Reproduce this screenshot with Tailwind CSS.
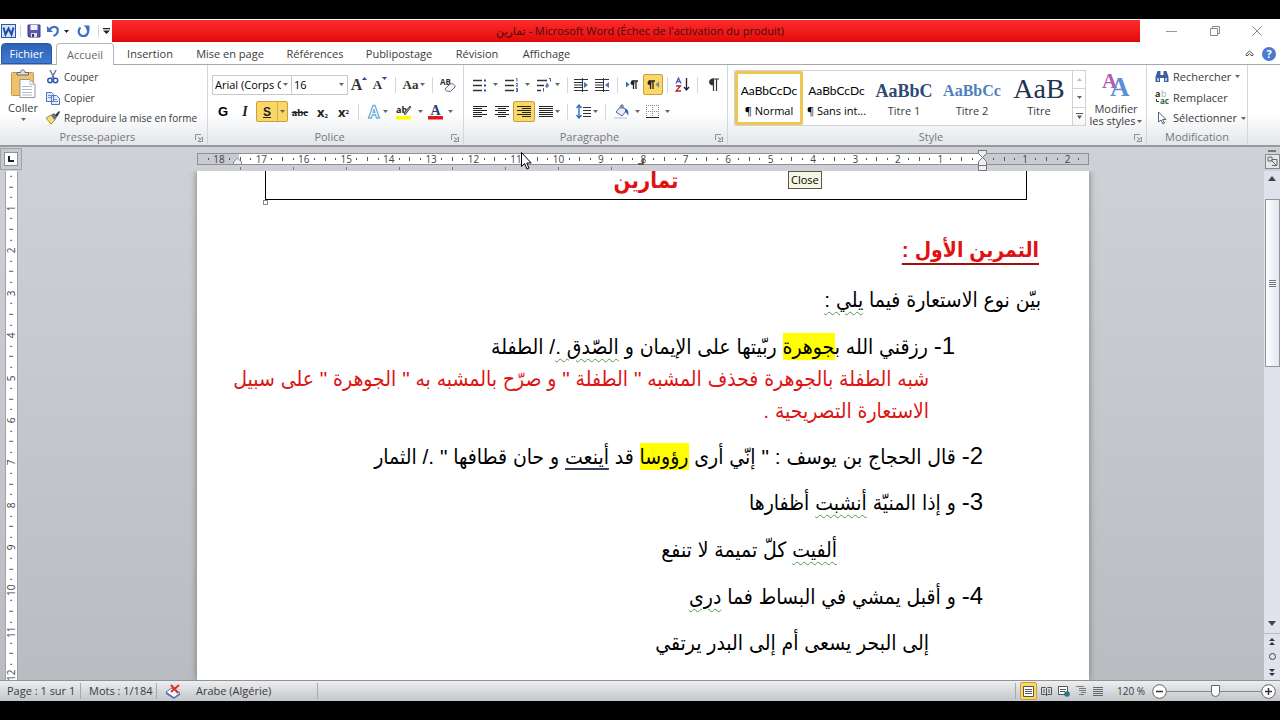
<!DOCTYPE html>
<html lang="fr">
<head>
  <meta charset="UTF-8">
  <meta name="viewport" content="width=device-width, initial-scale=1.0">
  <title>تمارين - Microsoft Word</title>
  <script src="https://cdn.jsdelivr.net/npm/@tailwindcss/browser@4"></script>
</head>
<body class="bg-black h-screen py-[19px] flex flex-col overflow-hidden font-['Open_Sans','DejaVu_Sans',sans-serif] text-[11px] leading-4 text-[#3b3b3b]">

  <!-- Shared icons -->
  <svg class="hidden">
    <symbol id="caret" viewBox="0 0 5 3"><path d="M0 0h5L2.5 3z" fill="#666"/></symbol>
    <symbol id="launcher" viewBox="0 0 8 8"><path d="M.5 6V.5H6M3 3l3 3M7.500 3v4.500H3z" fill="none" stroke="#8a8d91"/></symbol>
  </svg>

  <!-- Title bar -->
  <header class="h-6 shrink-0 bg-white flex items-center">
    <div class="w-28 flex items-center pl-px">
      <svg class="w-[15px] h-4 shrink-0" viewBox="0 0 15 16"><rect x=".5" y="1.500" width="14" height="13" fill="#d5e4f8" stroke="#2c5aa8"/><path d="M2.500 4.500l2 7 3-6 3 6 2-7" fill="none" stroke="#1d4fa3" stroke-width="2"/></svg>
      <span class="w-px h-3 bg-gray-300 mx-1"></span>
      <button class="ml-0.5" aria-label="Enregistrer"><svg class="w-[14px] h-[14px]" viewBox="0 0 14 14"><path d="M1 1h12v12H2l-1-1z" fill="#5a58b4" stroke="#3a3880"/><path d="M3.500 1h7v5h-7z" fill="#eef0fa"/><path d="M4 9h6v4H4z" fill="#d8daf0"/><path d="M5 10h2v3H5z" fill="#333377"/></svg></button>
      <button class="ml-1.5" aria-label="Annuler"><svg class="w-[13px] h-[14px]" viewBox="0 0 13 14"><path d="M2.500 5.500C6 1.500 11 2.500 10.800 6.500 10.700 9 9 11 6.500 12" fill="none" stroke="#3f6fc6" stroke-width="2.200"/><path d="M0 2v6h6z" fill="#3f6fc6"/></svg></button>
      <svg class="w-[5px] h-[3px] ml-1" viewBox="0 0 5 3"><path d="M0 0h5L2.500 3z" fill="#222"/></svg>
      <button class="ml-2" aria-label="Rétablir"><svg class="w-[13px] h-[14px]" viewBox="0 0 13 14"><path d="M3.500 3.500C0 7 2 12 6.500 12s6-5.500 3-8.500" fill="none" stroke="#3f6fc6" stroke-width="2.200"/><path d="M6.500 1.500h6v5.500z" fill="#3f6fc6"/></svg></button>
      <span class="w-px h-3 bg-gray-300 ml-2 mr-1"></span>
      <svg class="w-[7px] h-[6px] shrink-0" viewBox="0 0 7 6"><path d="M0 0h7v1.200H0zM0 2.500h7L3.500 6z" fill="#222"/></svg>
    </div>
    <h1 class="flex-1 h-[22px] pl-7 bg-gradient-to-b from-[#ff2a2a] to-[#e00808] text-center leading-[22px] text-[#4a0a0a]"><bdi>تمارين</bdi> - Microsoft Word (Échec de l'activation du produit)</h1>
    <div class="w-[140px] flex items-center justify-between pl-[26px] pr-[18px] text-[#777]">
      <button aria-label="Réduire"><svg class="w-[11px] h-3" viewBox="0 0 11 12"><path d="M0 6.500h11" stroke="#999"/></svg></button>
      <button aria-label="Restaurer"><svg class="w-[10px] h-3" viewBox="0 0 10 12"><path d="M.5 3.500h7v7h-7zM2.500 3.500v-2h7v7h-2" fill="none" stroke="#888"/></svg></button>
      <button aria-label="Fermer"><svg class="w-[10px] h-3" viewBox="0 0 10 12"><path d="M.5 1.500l9 9M9.500 1.500l-9 9" stroke="#888"/></svg></button>
    </div>
  </header>

  <!-- Tabs -->
  <nav class="h-[22px] shrink-0 bg-white border-b border-[#a5a8ac] flex items-end text-center">
    <button class="w-[51px] h-[21px] ml-px rounded-t-sm border border-[#2a57a5] bg-gradient-to-b from-[#2d62b8] to-[#3f7ad0] text-white">Fichier</button>
    <button class="w-[58px] h-[22px] ml-1 -mb-px rounded-t-sm border border-b-0 border-[#b4b7bb] bg-white text-[#666]">Accueil</button>
    <button class="w-[72px] h-[21px]">Insertion</button>
    <button class="w-[88px] h-[21px]">Mise en page</button>
    <button class="w-[82px] h-[21px]">Références</button>
    <button class="w-[86px] h-[21px]">Publipostage</button>
    <button class="w-[70px] h-[21px]">Révision</button>
    <button class="w-[69px] h-[21px]">Affichage</button>
    <div class="flex-1 h-[21px] flex items-center justify-end gap-2 pr-1">
      <button aria-label="Réduire le ruban"><svg class="w-[9px] h-[7px]" viewBox="0 0 9 7"><path d="M.7 4.500L4.500 1l3.800 3.500L7 6 4.500 3.800 2 6z" fill="#fff" stroke="#444"/></svg></button>
      <button class="size-[14px] rounded-full bg-[#4d7ad0] text-white font-bold leading-[14px]">?</button>
    </div>
  </nav>

  <!-- Ribbon -->
  <section class="h-[82px] shrink-0 flex border-b-2 border-[#97999d] bg-gradient-to-b from-white from-60% to-[#e3e6ea]">

    <div class="w-[208px] border-r border-[#d3d6da] flex flex-col">
      <div class="flex-1 flex">
        <button class="w-[46px] shrink-0 pt-1 flex flex-col items-center">
          <svg class="w-[25px] h-[29px]" viewBox="0 0 25 29"><rect x=".5" y="3.500" width="22" height="23" rx="1" fill="#efc169" stroke="#c99a45"/><path d="M6 6V3.500h3.500C9.500 0 14 0 14 3.500h3.500V6z" fill="#ddd" stroke="#666"/><path d="M9 10.500h10l5 5v13H9z" fill="#fff" stroke="#8f98a5"/><path d="M19 10.500v5h5M11 17.500h10M11 20.500h10M11 23.500h10M11 26h10" fill="none" stroke="#b5bcc8"/></svg>
          <span class="mt-0.5">Coller</span>
          <svg class="w-[5px] h-[3px] mt-0.5"><use href="#caret"/></svg>
        </button>
        <div class="flex flex-col pt-px text-[10px] whitespace-nowrap">
          <button class="h-[21px] flex items-center gap-1"><svg class="w-[14px] h-[14px] shrink-0" viewBox="0 0 14 14"><path d="M4 0l4.500 9M10 0L5.500 9" stroke="#6c7a93" stroke-width="1.500"/><circle cx="4" cy="10.500" r="2.200" fill="none" stroke="#2c55ab" stroke-width="1.500"/><circle cx="9.500" cy="10.500" r="2.200" fill="none" stroke="#2c55ab" stroke-width="1.500"/></svg>Couper</button>
          <button class="h-[21px] flex items-center gap-1"><svg class="w-[14px] h-[14px] shrink-0" viewBox="0 0 14 14"><path d="M.5 1.500h5l2 2v7h-7zM5.500 4.500h5l3 3v6h-8z" fill="#e4edfb" stroke="#5274b8"/><path d="M2 4.500h3M2 6.500h3M7 8.500h4M7 10.500h5" stroke="#6d8fd0"/></svg>Copier</button>
          <button class="h-[20px] flex items-center gap-1"><svg class="w-[14px] h-[14px] shrink-0" viewBox="0 0 14 14"><path d="M0 7l5-3 4 5-4 4z" fill="#f4dd7c" stroke="#a98d33"/><path d="M5 4l3-2 3 4-2 3z" fill="#68717f"/><path d="M9 4l4-4 1 1-3 5z" fill="#333"/></svg>Reproduire la mise en forme</button>
        </div>
      </div>
      <div class="h-4 flex items-center text-[#777]"><span class="flex-1 text-center">Presse-papiers</span><svg class="w-2 h-2 mr-1 mt-0.5"><use href="#launcher"/></svg></div>
    </div>

    <div class="w-64 border-r border-[#d3d6da] flex flex-col">
      <div class="flex-1 pt-[9px] flex flex-col gap-[6px]">
        <div class="h-[21px] flex items-center pl-1">
          <div class="relative w-20 h-[20px]">
            <select aria-label="Police" class="appearance-none w-full h-full pl-0.5 pr-2.5 border border-[#c6c9cd] bg-white text-black overflow-hidden whitespace-nowrap"><option>Arial (Corps CS)</option></select>
            <svg class="absolute right-1 top-2 w-[5px] h-[3px] pointer-events-none"><use href="#caret"/></svg>
          </div>
          <div class="relative w-[56px] h-[20px]">
            <select aria-label="Taille" class="appearance-none w-full h-full pl-0.5 border border-l-0 border-[#c6c9cd] bg-white text-black"><option>16</option></select>
            <svg class="absolute right-1 top-2 w-[5px] h-[3px] pointer-events-none"><use href="#caret"/></svg>
          </div>
          <button class="w-[22px] flex justify-center font-['Liberation_Serif',serif] font-bold text-[16px] text-[#333]" aria-label="Agrandir la police">A<svg class="w-[5px] h-[3px]" viewBox="0 0 5 3"><path d="M0 3h5L2.500 0z" fill="#234a9b"/></svg></button>
          <button class="w-[20px] flex justify-center font-['Liberation_Serif',serif] font-bold text-[13px] text-[#333]" aria-label="Réduire la police">A<svg class="w-[5px] h-[3px]" viewBox="0 0 5 3"><path d="M0 0h5L2.500 3z" fill="#234a9b"/></svg></button>
          <span class="w-px h-4 bg-[#d3d6da] mx-[5px]"></span>
          <button class="w-[26px] flex items-center justify-center gap-0.5 font-['Liberation_Serif',serif] font-bold text-[13px] text-[#333]">Aa<svg class="w-[5px] h-[3px]"><use href="#caret"/></svg></button>
          <span class="w-px h-4 bg-[#d3d6da] mx-[5px]"></span>
          <button class="w-[20px] flex justify-center" aria-label="Effacer la mise en forme"><svg class="w-[16px] h-[16px]" viewBox="0 0 16 16"><text x="0" y="8" font-size="8" font-weight="bold" fill="#333">AB</text><path d="M5 12l5-5c2-1 6 1 5 3l-4 4c-2 1-6 0-6-2z" fill="#f4f4f8" stroke="#667"/></svg></button>
        </div>
        <div class="h-[21px] flex items-center pl-1 text-[#222]">
          <button class="w-[22px] font-['Liberation_Sans',sans-serif] font-bold text-[13px] text-black">G</button>
          <button class="w-[22px] font-['Liberation_Serif',serif] font-bold italic text-[14px]">I</button>
          <button class="w-[32px] h-[21px] flex items-center rounded-xs border border-[#c9a03c] bg-[#fbd768]"><span class="flex-1 font-['Liberation_Sans',sans-serif] font-bold text-[12px] underline">S</span><span class="h-full w-[10px] border-l border-[#d8b04a] flex items-center justify-center"><svg class="w-[5px] h-[3px]"><use href="#caret"/></svg></span></button>
          <button class="w-[24px] font-['Liberation_Serif',serif] font-bold line-through">abc</button>
          <button class="w-[21px] font-bold text-[13px]">x<sub class="text-[6px]">2</sub></button>
          <button class="w-[21px] font-bold text-[13px]">x<sup class="text-[6px]">2</sup></button>
          <span class="w-px h-4 bg-[#d3d6da] ml-1 mr-2"></span>
          <button class="w-[29px] flex items-center gap-0.5" aria-label="Effets de texte"><svg class="w-[14px] h-[15px]" viewBox="0 0 14 15"><path d="M1.500 14L6 1.500h2L12.500 14h-3l-1-3h-3l-1 3zM6.300 8.500h1.500L7 5.500z" fill="#eff8fd" stroke="#72b1d4" stroke-width="1.300"/></svg><svg class="w-[5px] h-[3px]"><use href="#caret"/></svg></button>
          <button class="w-[32px] flex items-center gap-1.5" aria-label="Surlignage"><svg class="w-[16px] h-[16px]" viewBox="0 0 16 16"><text x="0" y="9" font-size="9" font-weight="bold" fill="#222">ab</text><path d="M9 11l6-8-1-1-6 7z" fill="#999" stroke="#555"/><path d="M0 12h15v3.500H0z" fill="#ff0"/></svg><svg class="w-[5px] h-[3px]"><use href="#caret"/></svg></button>
          <button class="w-[26px] flex items-center gap-1" aria-label="Couleur de police"><svg class="w-[16px] h-[16px]" viewBox="0 0 16 16"><text x="2.500" y="11" font-size="14" font-weight="bold" font-family="Liberation Serif" fill="#27407c">A</text><path d="M0 12h15v3.500H0z" fill="#e11616"/></svg><svg class="w-[5px] h-[3px]"><use href="#caret"/></svg></button>
        </div>
      </div>
      <div class="h-4 flex items-center text-[#777]"><span class="flex-1 text-center">Police</span><svg class="w-2 h-2 mr-1 mt-0.5"><use href="#launcher"/></svg></div>
    </div>

    <div class="w-[264px] border-r border-[#d3d6da] flex flex-col">
      <div class="flex-1 pt-[9px] flex flex-col gap-[6px]">
        <div class="h-[21px] flex items-center pl-[9px]">
          <button class="w-8 flex items-center gap-1.5" aria-label="Puces"><svg class="w-[14px] h-[14px]" viewBox="0 0 14 14"><path d="M0 2.500h9M0 7.500h9M0 12.500h9" stroke="#333" stroke-width="1.400"/><path d="M11 1.500h2v2h-2zM11 6.500h2v2h-2zM11 11.500h2v2h-2z" fill="#2b4f9e"/></svg><svg class="w-[5px] h-[3px]"><use href="#caret"/></svg></button>
          <button class="w-8 flex items-center gap-1.5" aria-label="Numérotation"><svg class="w-[14px] h-[14px]" viewBox="0 0 14 14"><path d="M0 2.500h9M0 7.500h9M0 12.500h9" stroke="#333" stroke-width="1.400"/><path d="M11 .5h1v3M11 5.500h1.500v1L11 8h2M11 10.500h1.500v3H11M11 12h1.500" fill="none" stroke="#3b56b0"/></svg><svg class="w-[5px] h-[3px]"><use href="#caret"/></svg></button>
          <button class="w-[26px] flex items-center gap-0.5" aria-label="Liste à plusieurs niveaux"><svg class="w-[16px] h-[14px]" viewBox="0 0 16 14"><path d="M0 2.500h10M0 7.500h7M0 12.500h4" stroke="#333" stroke-width="1.400"/><path d="M12 .5h1.500v3M9 6h2v3H9v-2h2M6.500 10v3.500" fill="none" stroke="#3b56b0"/></svg><svg class="w-[5px] h-[3px]"><use href="#caret"/></svg></button>
          <span class="w-px h-4 bg-[#d3d6da] ml-1 mr-1.5"></span>
          <button class="w-[21px]" aria-label="Diminuer le retrait"><svg class="w-[15px] h-[14px]" viewBox="0 0 15 14"><path d="M0 1.500h14M0 12.500h14M0 4.500h8M0 7h8M0 9.500h8M8.500 0v14" stroke="#333"/><path d="M10 4l4 3-4 3z" fill="#4d75c7"/></svg></button>
          <button class="w-[18px]" aria-label="Augmenter le retrait"><svg class="w-[15px] h-[14px]" viewBox="0 0 15 14"><path d="M0 1.500h14M0 12.500h14M0 4.500h8M0 7h8M0 9.500h8M8.500 0v14" stroke="#333"/><path d="M14 4l-4 3 4 3z" fill="#4d75c7"/></svg></button>
          <span class="w-px h-4 bg-[#d3d6da] ml-1 mr-2"></span>
          <button class="w-[17px]" aria-label="De gauche à droite"><svg class="w-[12px] h-[12px]" viewBox="0 0 12 12"><path d="M0 2.500l3.500 3L0 8.500z" fill="#2f6fc0"/><path d="M7.500 2v8M10 2v8M5.500 2H12" stroke="#222" stroke-width="1.300"/><circle cx="6.500" cy="4" r="2" fill="#222"/></svg></button>
          <button class="w-5 h-[21px] rounded-xs border border-[#c9a03c] bg-[#fbd768] flex items-center justify-center" aria-label="De droite à gauche"><svg class="w-[12px] h-[12px]" viewBox="0 0 12 12"><path d="M12 2.500l-3.500 3 3.500 3z" fill="#6b8b9c"/><path d="M3.500 2v8M6 2v8M1.500 2H8" stroke="#222" stroke-width="1.300"/><circle cx="2.500" cy="4" r="2" fill="#222"/></svg></button>
          <span class="w-px h-4 bg-[#d3d6da] ml-1 mr-[7px]"></span>
          <button class="w-[18px]" aria-label="Trier"><svg class="w-[15px] h-[15px]" viewBox="0 0 15 15"><path d="M1 6.500L3.500 1 6 6.500M2 4.500h3" fill="none" stroke="#4560b4" stroke-width="1.300"/><path d="M1 9h4.500L1 14h5" fill="none" stroke="#a62a3a" stroke-width="1.300"/><path d="M11.500 1v12M9 10l2.500 3L14 10" fill="none" stroke="#222" stroke-width="1.300"/></svg></button>
          <span class="w-px h-4 bg-[#d3d6da] ml-1 mr-2.5"></span>
          <button aria-label="Afficher tout"><svg class="w-[11px] h-[14px]" viewBox="0 0 11 14"><path d="M5.500 1v12M8.500 1v12M4 1h7" stroke="#333" stroke-width="1.200"/><path d="M5.500.5v7C-.5 7.500-.5.500 5.500.500z" fill="#333"/></svg></button>
        </div>
        <div class="h-[21px] flex items-center pl-[9px]">
          <button class="w-[22px]" aria-label="Aligner à gauche"><svg class="w-[14px] h-[12px]" viewBox="0 0 14 12"><path d="M0 .5h14M0 2.500h9M0 4.500h14M0 6.500h9M0 8.500h14M0 10.500h9" stroke="#222"/></svg></button>
          <button class="w-[18px]" aria-label="Centrer"><svg class="w-[14px] h-[12px]" viewBox="0 0 14 12"><path d="M0 .5h14M3 2.500h8M0 4.500h14M3 6.500h8M0 8.500h14M3 10.500h8" stroke="#222"/></svg></button>
          <button class="w-[22px] h-[21px] mr-1 rounded-xs border border-[#c9a03c] bg-[#fbd768] flex items-center justify-center" aria-label="Aligner à droite"><svg class="w-[14px] h-[12px]" viewBox="0 0 14 12"><path d="M0 .5h14M5 2.500h9M0 4.500h14M5 6.500h9M0 8.500h14M5 10.500h9" stroke="#222"/></svg></button>
          <button class="w-[22px] flex items-center gap-0.5" aria-label="Justifier"><svg class="w-[14px] h-[12px]" viewBox="0 0 14 12"><path d="M0 .5h14M0 2.500h14M0 4.500h14M0 6.500h14M0 8.500h14M0 10.500h14" stroke="#222"/></svg><svg class="w-[5px] h-[3px]"><use href="#caret"/></svg></button>
          <span class="w-px h-4 bg-[#d3d6da] ml-1.5 mr-2"></span>
          <button class="w-[23px] flex items-center gap-0.5" aria-label="Interligne"><svg class="w-[15px] h-[15px]" viewBox="0 0 15 15"><path d="M3 1v13M.5 4L3 1l2.500 3M.5 11L3 14l2.500-3" fill="none" stroke="#2f6fc0" stroke-width="1.400"/><path d="M7 3.500h8M7 6.500h8M7 9.500h8M7 12.500h8" stroke="#333"/></svg><svg class="w-[5px] h-[3px]"><use href="#caret"/></svg></button>
          <span class="w-px h-4 bg-[#d3d6da] ml-1.5 mr-2"></span>
          <button class="w-8 flex items-center gap-1.5" aria-label="Trame de fond"><svg class="w-[15px] h-[15px]" viewBox="0 0 15 15"><path d="M2 8l5-6 6 4-5 6z" fill="#e8eff8" stroke="#4a6690"/><path d="M7 5V1h2v4" fill="none" stroke="#667"/><path d="M11 5c3 0 4 3 3 7-1-3-2-4-3-4z" fill="#2f62b3"/><path d="M0 13h13v2H0z" fill="#d9dbde"/></svg><svg class="w-[5px] h-[3px]"><use href="#caret"/></svg></button>
          <button class="flex items-center gap-1.5" aria-label="Bordures"><svg class="w-[13px] h-[13px]" viewBox="0 0 13 13"><path d="M.5 0v12M6.500 0v12M12.500 0v12M0 .5h13M0 6.500h13" stroke="#888" stroke-dasharray="1 1"/><path d="M0 12.500h13" stroke="#222"/></svg><svg class="w-[5px] h-[3px]"><use href="#caret"/></svg></button>
        </div>
      </div>
      <div class="h-4 flex items-center text-[#777]"><span class="flex-1 text-center">Paragraphe</span><svg class="w-2 h-2 mr-1 mt-0.5"><use href="#launcher"/></svg></div>
    </div>

    <div class="flex-1 border-r border-[#d3d6da] flex flex-col">
      <div class="flex-1 flex pt-[5px] pl-[6px]">
        <div class="flex-1 h-[56px] flex border border-[#cfd2d6] bg-white text-center overflow-hidden">
          <button class="w-[68px] h-[54px] rounded-xs border-3 border-[#efc64f] flex flex-col items-center pt-[9px] text-black"><span class="h-5 text-[12px] font-['Lato',sans-serif]">AaBbCcDc</span><span>¶ Normal</span></button>
          <button class="w-[67px] flex flex-col items-center pt-3 text-black"><span class="h-5 text-[12px] font-['Lato',sans-serif]">AaBbCcDc</span><span>¶ Sans int...</span></button>
          <button class="w-[68px] flex flex-col items-center pt-3"><span class="h-5 text-[18px] leading-4 font-bold font-['Liberation_Serif',serif] text-[#2c4a75]">AaBbC</span><span>Titre 1</span></button>
          <button class="w-[68px] flex flex-col items-center pt-3"><span class="h-5 text-[16px] leading-4 font-bold font-['Liberation_Serif',serif] text-[#4f7fbd]">AaBbCc</span><span>Titre 2</span></button>
          <button class="flex-1 flex flex-col items-center pt-2"><span class="h-6 text-[28px] leading-5 font-['Liberation_Serif',serif] text-[#1f3350]">AaB</span><span>Titre</span></button>
        </div>
        <div class="w-[13px] h-[56px] flex flex-col border border-l-0 border-[#cfd2d6]">
          <button class="flex-1 flex items-center justify-center" aria-label="Haut"><svg class="w-[5px] h-[3px]" viewBox="0 0 5 3"><path d="M0 3h5L2.500 0z" fill="#bbb"/></svg></button>
          <button class="flex-1 flex items-center justify-center border-y border-[#cfd2d6]" aria-label="Bas"><svg class="w-[5px] h-[3px]"><use href="#caret"/></svg></button>
          <button class="flex-1 flex items-center justify-center" aria-label="Autres"><svg class="w-[7px] h-[6px]" viewBox="0 0 7 6"><path d="M0 0h7v1H0zM1 2.500h5L3.500 6z" fill="#555"/></svg></button>
        </div>
        <button class="w-[60px] flex flex-col items-center leading-3">
          <svg class="w-[28px] h-[29px] mt-0.5 shrink-0 overflow-visible" viewBox="0 0 28 29"><text x="0" y="16" font-size="21" font-weight="bold" font-family="Liberation Serif" fill="#b457b5">A</text><text x="8" y="24" font-size="27" font-weight="bold" font-family="Liberation Serif" fill="#5c8fd4">A</text></svg>
          <span class="mt-0.5">Modifier</span>
          <span class="flex items-center gap-0.5 whitespace-nowrap">les styles<svg class="w-[5px] h-[3px]"><use href="#caret"/></svg></span>
        </button>
      </div>
      <div class="h-4 flex items-center text-[#777]"><span class="flex-1 text-center">Style</span><svg class="w-2 h-2 mr-1 mt-0.5"><use href="#launcher"/></svg></div>
    </div>

    <div class="w-[101px] border-r border-[#d3d6da] flex flex-col">
      <div class="flex-1 pt-px pl-2 flex flex-col">
        <button class="h-[21px] flex items-center gap-1"><svg class="w-[14px] h-[13px] shrink-0" viewBox="0 0 14 13"><path d="M2.500 1h3v4h3V1h3l2 6v5H9V8H5v4H.5V7z" fill="#3c5f9f"/><path d="M2 8h2v3H2zM10 8h2v3h-2z" fill="#a9c4ee"/></svg>Rechercher<svg class="w-[5px] h-[3px]"><use href="#caret"/></svg></button>
        <button class="h-[21px] flex items-center gap-1"><svg class="w-[14px] h-[14px] shrink-0 overflow-visible" viewBox="0 0 14 14"><text x="0" y="6" font-size="9" font-weight="bold" fill="#333">a</text><text x="6" y="6" font-size="9" fill="#aaa">b</text><path d="M1.500 8v2.500H4" fill="none" stroke="#333"/><text x="5" y="13" font-size="8" font-weight="bold" fill="#2a6a3c">ac</text></svg>Remplacer</button>
        <button class="h-[20px] flex items-center gap-1"><svg class="w-[14px] h-[14px] shrink-0" viewBox="0 0 14 14"><path d="M3.500 1v10l2.500-2 2 4 1.500-1-2-3.500H11z" fill="#fff" stroke="#56627c"/></svg>Sélectionner<svg class="w-[5px] h-[3px]"><use href="#caret"/></svg></button>
      </div>
      <div class="h-4 text-center text-[#777]">Modification</div>
    </div>
    <div class="w-8"></div>
  </section>

  <!-- Document area -->
  <main class="flex-1 min-h-0 flex flex-col bg-gradient-to-b from-[#cfd1d6] to-[#b9bdc1]">
    <div class="h-6 shrink-0 flex items-center">
      <button class="size-[22px] border border-[#a0a3a8] bg-[#c6c9ce] flex items-center justify-center" aria-label="Tabulation"><span class="size-[14px] border border-[#8d9095] bg-white flex items-center justify-center"><svg class="size-[6px]" viewBox="0 0 6 6"><path d="M1 0v5h5" fill="none" stroke="#222" stroke-width="2"/></svg></span></button>
      <div class="flex-1 flex justify-center">
        <div class="relative w-[892px]">
          <div id="hruler" class="h-3 px-[5px] flex items-center border border-[#8d9095] bg-[linear-gradient(to_right,#c8cbd1_41px,#fff_41px,#fff_785px,#c8cbd1_785px)] text-[10px] leading-[10px] text-[#444]"></div>
          <!-- Tab stops and indent markers -->
          <div class="absolute left-[43px] right-[440px] top-[14px] h-[3px] bg-[repeating-linear-gradient(to_right,#777_0_1px,transparent_1px_53px)]"></div>
          <svg class="absolute left-[441px] top-[6px] w-[6px] h-[6px]" viewBox="0 0 6 6"><path d="M0 5h5V0" fill="none" stroke="#444" stroke-width="1.500"/></svg>
          <svg class="absolute left-[36px] top-1 w-[9px] h-2" viewBox="0 0 9 8"><path d="M.5 7.500V5l4-4 4 4v2.500z" fill="#eee" stroke="#888"/></svg>
          <svg class="absolute left-[781px] -top-[3px] w-[9px] h-[21px]" viewBox="0 0 9 21"><path d="M.5.5h8v3l-4 4-4-4zM.5 15.500v-4l4-4 4 4v4zM.5 15.500h8v5h-8z" fill="#eee" stroke="#777"/></svg>
        </div>
      </div>
      <div class="w-4 flex flex-col items-center gap-0.5"><span class="w-2 h-0.5 bg-[#777]"></span><button class="size-[15px] border border-[#888] bg-[#e4e6ea] flex items-center justify-center" aria-label="Règle"><svg class="size-[11px]" viewBox="0 0 11 11"><path d="M1 1h4v4H1zM4 4l5 5M5 3.500h5v6H5" fill="none" stroke="#666"/></svg></button></div>
    </div>

    <div class="flex-1 min-h-0 flex">
      <div class="w-[22px] pl-[5px]">
        <div id="vruler" class="w-[13px] h-full flex flex-col bg-white border-x border-[#a0a3a8] text-[10px] leading-[10px] text-[#444]"></div>
      </div>

      <div class="flex-1 flex justify-center overflow-hidden">
        <article dir="rtl" class="w-[892px] h-full bg-white shadow-[0_0_7px_#777] font-['Liberation_Sans','DejaVu_Sans_Condensed','DejaVu_Sans',sans-serif] text-[21px] leading-8 text-black whitespace-nowrap overflow-hidden">
          <div class="relative h-[29px] mr-[62px] ml-[68px] flex justify-center border border-t-0 border-black">
            <h2 class="-mt-1.5 text-[22px] font-bold text-[#e01111]">تمارين</h2>
            <span class="absolute -left-[3px] -bottom-[6px] size-[5px] border border-[#888] bg-white"></span>
          </div>
          <h3 class="mt-[34px] mr-[50px] font-bold text-[#e01111] underline decoration-2 decoration-[#a01010] underline-offset-6">التمرين الأول :</h3>
          <p class="mt-[18px] mr-[48px]">بيّن نوع الاستعارة فيما <span class="underline decoration-wavy decoration-1 decoration-[#4c9a4c] underline-offset-4">يلي :</span></p>
          <p class="mt-[15px] mr-[134px]"><span class="text-[24px] leading-6">1-</span> رزقني الله ب<mark class="py-0.5 bg-[#ff0]">جوهرة</mark> ربّيتها على الإيمان و <span class="underline decoration-wavy decoration-1 decoration-[#4c9a4c] underline-offset-4">الصّدق .</span>/ الطفلة</p>
          <p class="mr-[160px] text-[#dc1414]">شبه الطفلة بالجوهرة فحذف المشبه " الطفلة " و صرّح بالمشبه به " الجوهرة " على سبيل<br>الاستعارة التصريحية .</p>
          <p class="mt-[14px] mr-[106px]"><span class="text-[24px] leading-6">2-</span> قال الحجاج بن يوسف : " إنّي أرى <mark class="py-0.5 bg-[#ff0]">رؤوسا</mark> قد <span class="underline decoration-2 decoration-[#333f5c] underline-offset-4">أينعت</span> و حان قطافها " ./ الثمار</p>
          <p class="mt-[14px] mr-[106px]"><span class="text-[24px] leading-6">3-</span> و إذا المنيّة <span class="underline decoration-wavy decoration-1 decoration-[#4c9a4c] underline-offset-4">أنشبت</span> أظفارها</p>
          <p class="mt-[15px] mr-[252px]"><span class="underline decoration-wavy decoration-1 decoration-[#4c9a4c] underline-offset-4">ألفيت</span> كلّ تميمة لا تنفع</p>
          <p class="mt-[15px] mr-[106px]"><span class="text-[24px] leading-6">4-</span> و أقبل يمشي في البساط فما <span class="underline decoration-wavy decoration-1 decoration-[#4c9a4c] underline-offset-4">درى</span></p>
          <p class="mt-[14px] mr-[160px]">إلى البحر يسعى أم إلى البدر يرتقي</p>
        </article>
      </div>

      <div class="w-4 flex flex-col items-center bg-[#dfe2ea]">
        <button class="h-[28px] w-full flex justify-center pt-[5px]" aria-label="Défiler vers le haut"><svg class="w-[8px] h-[5px]" viewBox="0 0 8 5"><path d="M0 5h8L4 0z" fill="#444"/></svg></button>
        <div class="w-[15px] h-[168px] border border-[#8f959f] bg-gradient-to-r from-white to-[#e3e7ef] flex flex-col items-center justify-center gap-px"><span class="w-[7px] h-px bg-[#777]"></span><span class="w-[7px] h-px bg-[#777]"></span><span class="w-[7px] h-px bg-[#777]"></span><span class="w-[7px] h-px bg-[#777]"></span></div>
        <div class="flex-1"></div>
        <button class="h-[12px] flex items-start" aria-label="Défiler vers le bas"><svg class="w-[8px] h-[5px]" viewBox="0 0 8 5"><path d="M0 0h8L4 5z" fill="#444"/></svg></button>
        <button class="w-full h-4 border-t border-[#b4b8c0] flex items-center justify-center" aria-label="Page précédente"><svg class="w-[6px] h-[7px]" viewBox="0 0 6 7"><path d="M0 3h6L3 0zM0 7h6L3 4z" fill="#333"/></svg></button>
        <button class="size-[7px] my-[4px] rounded-full border border-[#444]" aria-label="Objet"></button>
        <button class="h-4 flex items-center" aria-label="Page suivante"><svg class="w-[6px] h-[7px]" viewBox="0 0 6 7"><path d="M0 0h6L3 3zM0 4h6L3 7z" fill="#333"/></svg></button>
      </div>
    </div>
  </main>

  <!-- Status bar -->
  <footer class="h-[21px] shrink-0 flex items-center border-t border-[#8f9296] bg-gradient-to-b from-[#eceef0] to-[#c3c6ca]">
    <span class="w-[81px] h-4 pl-[7px] border-r border-[#a5a8ac]">Page : 1 sur 1</span>
    <span class="w-[76px] h-4 pl-2 border-r border-[#a5a8ac]">Mots : 1/184</span>
    <svg class="w-4 h-[15px] ml-2" viewBox="0 0 16 15"><path d="M1 8l6-4 8 5-6 5z" fill="#fff" stroke="#5a6fb0"/><path d="M1 9l8 5 6-4" fill="none" stroke="#5a6fb0" stroke-width="1.500"/><path d="M6 1l7 8M14 1L6 8" stroke="#df3328" stroke-width="2"/></svg>
    <span class="w-[122px] h-4 ml-[15px] mr-auto border-r border-[#a5a8ac]">Arabe (Algérie)</span>
    <span class="w-px h-4 bg-[#a5a8ac] mr-1"></span>
    <button class="w-[17px] h-[18px] mr-1 rounded-xs border border-[#c9a03c] bg-[#fbd768] flex items-center justify-center" aria-label="Page"><svg class="w-[11px] h-[11px]" viewBox="0 0 11 11"><path d="M.5.5h10v10H.5zM2 3.500h7M2 5.500h7M2 7.500h7" fill="#fff" stroke="#555"/></svg></button>
    <button class="w-[17px]" aria-label="Lecture"><svg class="w-[11px] h-[11px]" viewBox="0 0 11 11"><path d="M.5 1.500h4l1 1 1-1h4v7h-4l-1 1-1-1h-4zM5.500 2v8M2 4h2M2 6h2M7 4h2M7 6h2" fill="none" stroke="#555"/></svg></button>
    <button class="w-[18px]" aria-label="Web"><svg class="w-[12px] h-[11px]" viewBox="0 0 12 11"><path d="M.5.5h9v8h-9zM2 3.500h6M2 5.500h5" fill="#fff" stroke="#555"/><circle cx="9" cy="8" r="2.800" fill="#2c7185"/></svg></button>
    <button class="w-[17px]" aria-label="Plan"><svg class="w-[10px] h-[10px]" viewBox="0 0 10 10"><path d="M0 .5h8M3 2.500h7M3 4.500h7M5 6.500h5M3 8.500h5" stroke="#777"/></svg></button>
    <button aria-label="Brouillon"><svg class="w-[10px] h-[10px]" viewBox="0 0 10 10"><path d="M0 1.500h10M0 3.500h10M0 5.500h10M0 7.500h10M0 9.500h10" stroke="#666"/></svg></button>
    <span class="w-[49px] pl-3.5 text-[10px] whitespace-nowrap">120 %</span>
    <button aria-label="Zoom arrière"><svg class="size-[15px]" viewBox="0 0 15 15"><circle cx="7.500" cy="7.500" r="6.800" fill="#fff" stroke="#666"/><path d="M4 7.500h7" stroke="#333" stroke-width="1.500"/></svg></button>
    <input type="range" min="0" max="100" value="52" aria-label="Zoom" class="w-[94px] h-px appearance-none bg-[#888] [&::-webkit-slider-thumb]:appearance-none [&::-webkit-slider-thumb]:w-[9px] [&::-webkit-slider-thumb]:h-[12px] [&::-webkit-slider-thumb]:bg-white [&::-webkit-slider-thumb]:border [&::-webkit-slider-thumb]:border-[#666] [&::-webkit-slider-thumb]:rounded-b-full">
    <button class="mr-1" aria-label="Zoom avant"><svg class="size-[15px]" viewBox="0 0 15 15"><circle cx="7.500" cy="7.500" r="6.800" fill="#fff" stroke="#666"/><path d="M4 7.500h7M7.500 4v7" stroke="#333" stroke-width="1.500"/></svg></button>
  </footer>

  <!-- Tooltip and mouse pointer -->
  <div class="absolute left-[788px] top-[171px] h-[18px] px-0.5 border border-[#555] bg-[#f6f6e2] text-black">Close</div>
  <svg class="absolute left-[521px] top-[152px] w-[11px] h-[18px]" viewBox="0 0 11 18"><path d="M.5.5v14l3-3 2.500 5.500 2-1L5.700 11h4.500z" fill="#fff" stroke="#000"/></svg>

  <script>
    // Horizontal ruler: 18 down to 0, then 1 and 2 in the margin
    const h = document.getElementById("hruler");
    for (let n = 18; n >= -2; n--) {
      const marks = ["·", n === 0 ? "" : Math.abs(n), "·", "|"];
      if (n === -2) marks.pop();
      marks.forEach(m => addMark(h, m, "flex-1 w-0 flex justify-center"));
    }

    // Vertical ruler: 1 to 12
    const v = document.getElementById("vruler");
    for (let n = 1; n <= 12; n++) {
      ["·", "|", "·", n].forEach(m => addMark(v, m, "flex-1 h-0 flex items-center justify-center -rotate-90"));
    }

    function addMark(ruler, mark, classes) {
      const el = document.createElement("span");
      el.className = classes;
      if (mark === "|") {
        el.innerHTML = '<i class="w-px h-1 bg-[#555]"></i>';
      } else if (mark === "·") {
        el.innerHTML = '<i class="w-px h-0.5 bg-[#555]"></i>';
      } else {
        el.textContent = mark;
      }
      ruler.appendChild(el);
    }
  </script>
</body>
</html>
